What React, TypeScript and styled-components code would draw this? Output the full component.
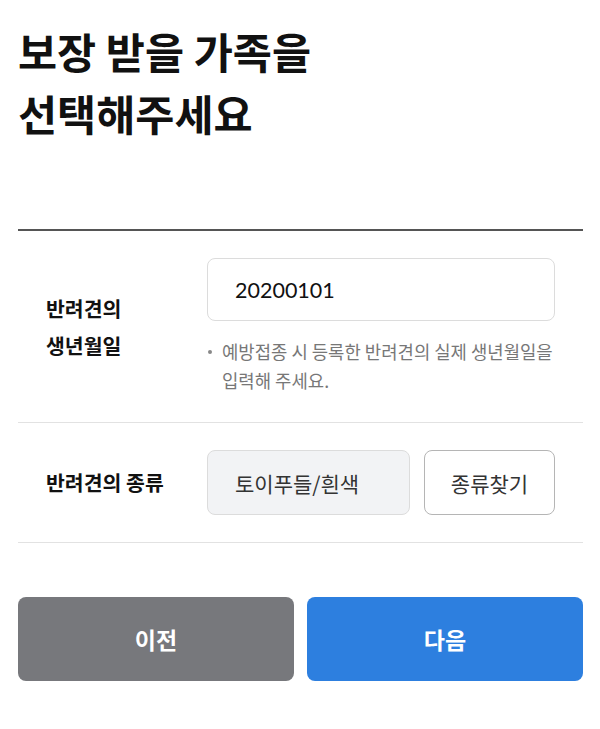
import React from "react";
import styled, { createGlobalStyle } from "styled-components";

const GlobalStyle = createGlobalStyle`
  body {
    margin: 0;
    background: #fff;
    font-family: "Noto Sans CJK KR", "Noto Sans", sans-serif;
    color: #111;
  }
`;

const Page = styled.div`
  width: 600px;
  box-sizing: border-box;
  padding: 20px 17px 40px 18px;
`;

const Title = styled.h1`
  margin: 0;
  font-size: 42.5px;
  font-weight: 700;
  line-height: 62px;
  color: #111;
  height: 209px;
`;

const Form = styled.div`
  border-top: 2px solid #555;
`;

const Row = styled.div`
  display: grid;
  grid-template-columns: 189px 1fr;
  align-items: center;
  padding: 27px 28px 27px 0;
  & + & {
    border-top: 1px solid #e2e2e2;
  }
  &:last-child {
    border-bottom: 1px solid #e2e2e2;
  }
`;

const Label = styled.div`
  padding-left: 28px;
  font-size: 20.5px;
  font-weight: 700;
  line-height: 37px;
  color: #111;
`;

const Field = styled.div`
  display: flex;
  flex-direction: column;
`;

const TextBox = styled.div`
  box-sizing: border-box;
  height: 63px;
  border: 1px solid #dcdcdc;
  border-radius: 8px;
  padding: 0 27px;
  display: flex;
  align-items: center;
  font-family: "Lato", "Noto Sans CJK KR", sans-serif;
  font-size: 21.5px;
  color: #111;
`;

const Hint = styled.ul`
  margin: 16px 0 0;
  padding: 0;
  list-style: none;
  li {
    position: relative;
    padding-left: 15px;
    font-size: 17.8px;
    line-height: 29px;
    color: #777;
    word-break: keep-all;
  }
  li::before {
    content: "";
    position: absolute;
    left: 1px;
    top: 13px;
    width: 4px;
    height: 4px;
    border-radius: 50%;
    background: #888;
  }
`;

const BreedLine = styled.div`
  display: flex;
  gap: 14px;
`;

const ReadBox = styled.div`
  box-sizing: border-box;
  flex: 0 0 203px;
  height: 65px;
  border: 1px solid #dcdcdc;
  border-radius: 8px;
  background: #f2f3f5;
  display: flex;
  align-items: center;
  padding-left: 27px;
  font-size: 21px;
  color: #333;
`;

const OutlineButton = styled.button`
  box-sizing: border-box;
  flex: 1;
  height: 65px;
  border: 1px solid #b5b5b5;
  border-radius: 8px;
  background: #fff;
  font-family: inherit;
  font-size: 21px;
  color: #333;
`;

const Actions = styled.div`
  display: grid;
  grid-template-columns: 1fr 1fr;
  gap: 13px;
  margin-top: 54px;
`;

const ActionButton = styled.button<{ $primary?: boolean }>`
  height: 84px;
  border: none;
  border-radius: 8px;
  background: ${(p) => (p.$primary ? "#2d7fdf" : "#77787c")};
  color: #fff;
  font-family: inherit;
  font-size: 23px;
  font-weight: 700;
`;

export default function App() {
  return (
    <>
      <GlobalStyle />
      <Page>
        <Title>
          보장 받을 가족을
          <br />
          선택해주세요
        </Title>
        <Form>
          <Row>
            <Label>
              반려견의
              <br />
              생년월일
            </Label>
            <Field>
              <TextBox>20200101</TextBox>
              <Hint>
                <li>예방접종 시 등록한 반려견의 실제 생년월일을 입력해 주세요.</li>
              </Hint>
            </Field>
          </Row>
          <Row>
            <Label>반려견의 종류</Label>
            <BreedLine>
              <ReadBox>토이푸들/흰색</ReadBox>
              <OutlineButton>종류찾기</OutlineButton>
            </BreedLine>
          </Row>
        </Form>
        <Actions>
          <ActionButton>이전</ActionButton>
          <ActionButton $primary>다음</ActionButton>
        </Actions>
      </Page>
    </>
  );
}
